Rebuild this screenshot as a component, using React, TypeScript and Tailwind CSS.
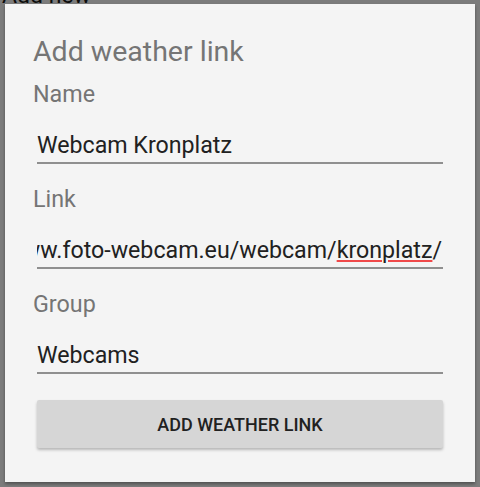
const font = { fontFamily: 'Roboto, "Noto Sans", sans-serif' };

interface FieldProps {
  label: string;
  children: React.ReactNode;
}

const Field: React.FC<FieldProps> = ({ label, children }) => {
  return (
    <div className="flex flex-col">
      <div className="pl-[28px] text-[23.3px] leading-[23px] text-[#757575]">{label}</div>
      <div className="mx-[32px] mt-[26px] flex h-[27px] justify-end overflow-hidden whitespace-nowrap text-[23.2px] leading-[27px] text-[#212121]">
        {children}
      </div>
      <div className="mx-[32px] mt-[3px] h-[2px] bg-[#8f8f8f]" />
    </div>
  );
};

export default function App() {
  return (
    <div className="relative h-[487px] w-[480px] overflow-hidden bg-[#7c7c7c]" style={font}>
      {/* page behind the dialog */}
      <div className="absolute left-[2px] top-[-16px] text-[23px] leading-[23px] text-[#0c0c0c]">Add new</div>

      <div className="relative pl-[5px] pt-[4px]">
        <div className="flex h-[478px] w-[470px] flex-col bg-[#f4f4f4] pt-[34px] shadow-[0_2px_3px_rgba(0,0,0,0.35)]">
          <div className="pl-[28px] text-[28.5px] leading-[28px] text-[#757575]">Add weather link</div>

          <div className="mt-[17px] flex flex-col gap-[24px]">
            <Field label="Name">
              <span className="w-full">Webcam Kronplatz</span>
            </Field>
            <Field label="Link">
              <span className="pr-px">
                http://www.foto-webcam.eu/webcam/
                <span className="underline decoration-[color:#f0494a] decoration-2 underline-offset-[2px]">kronplatz</span>/
              </span>
            </Field>
            <Field label="Group">
              <span className="w-full">Webcams</span>
            </Field>
          </div>

          <div className="mx-[32px] mt-[26px]">
            <button className="flex h-[48px] w-full items-center justify-center rounded-[2px] bg-[#d6d6d6] text-[18px] font-medium text-[#212121] shadow-[0_2px_3px_rgba(0,0,0,0.25)]">
              ADD WEATHER LINK
            </button>
          </div>
        </div>
      </div>
    </div>
  );
}
